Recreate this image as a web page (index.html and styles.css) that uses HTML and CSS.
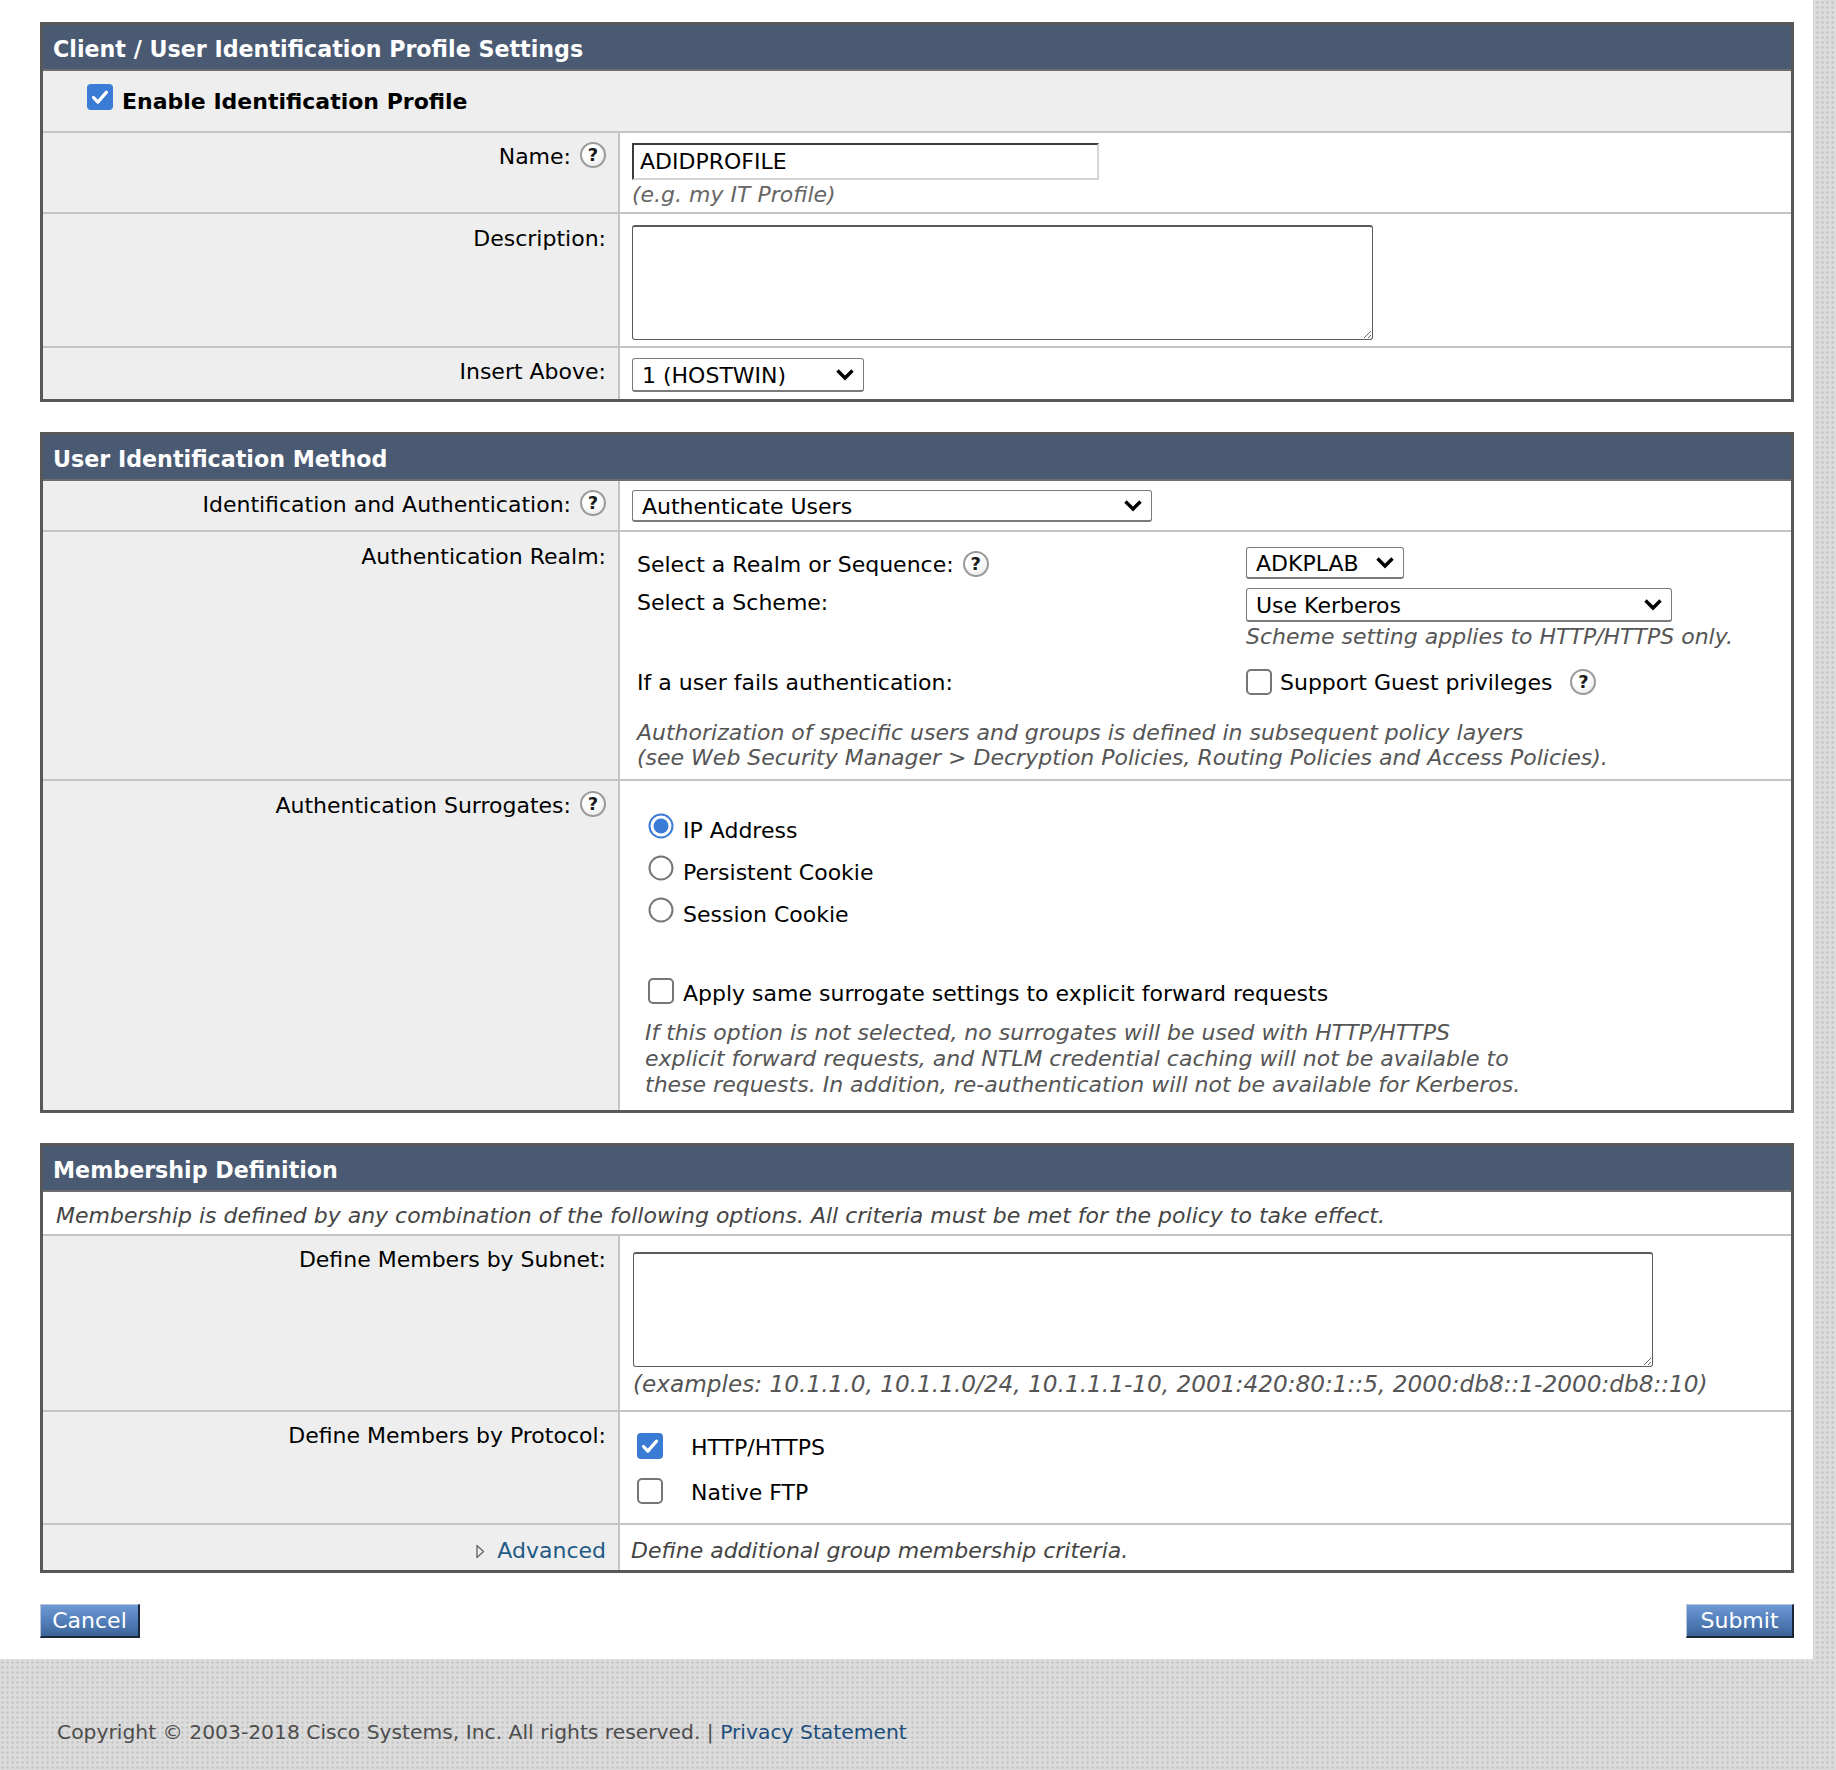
FILE: index.html
```html
<!DOCTYPE html>
<html lang="en">
<head>
<meta charset="utf-8">
<title>Client / User Identification Profile Settings</title>
<link rel="stylesheet" href="styles.css">
</head>
<body>
<div class="page">

  <section class="panel">
    <h2 class="panel-head">Client / User Identification Profile Settings</h2>
    <div class="enable-row">
      <svg class="cb" width="26" height="26" viewBox="0 0 26 26"><rect width="26" height="26" rx="4" fill="#3a7bd5"/><path d="M6.5 13.5l4.3 4.6 8.7-10" fill="none" stroke="#fff" stroke-width="3.2" stroke-linecap="round" stroke-linejoin="round"/></svg>
      <span>Enable Identification Profile</span>
    </div>
    <div class="row">
      <div class="lbl p11"><span>Name:</span><span class="help">?</span></div>
      <div class="val name-val">
        <input class="txt" type="text" value="ADIDPROFILE">
        <div class="hint">(e.g. my IT Profile)</div>
      </div>
    </div>
    <div class="row">
      <div class="lbl p12"><span>Description:</span></div>
      <div class="val desc-val"><textarea class="ta ta-desc"></textarea></div>
    </div>
    <div class="row">
      <div class="lbl p11"><span>Insert Above:</span></div>
      <div class="val insert-val">
        <div class="sel sel-insert"><span>1 (HOSTWIN)</span><svg class="chev" width="20" height="13" viewBox="0 0 20 13"><path d="M2.5 2.5l7.5 7.5 7.5-7.5" fill="none" stroke="#000" stroke-width="3.4"/></svg></div>
      </div>
    </div>
  </section>

  <section class="panel">
    <h2 class="panel-head">User Identification Method</h2>
    <div class="row">
      <div class="lbl p11"><span>Identification and Authentication:</span><span class="help">?</span></div>
      <div class="val ident-val">
        <div class="sel sel-auth"><span>Authenticate Users</span><svg class="chev" width="20" height="13" viewBox="0 0 20 13"><path d="M2.5 2.5l7.5 7.5 7.5-7.5" fill="none" stroke="#000" stroke-width="3.4"/></svg></div>
      </div>
    </div>
    <div class="row">
      <div class="lbl p12"><span>Authentication Realm:</span></div>
      <div class="val realm-val">
        <div class="realm">
          <div class="r1-label"><span>Select a Realm or Sequence:</span><span class="help">?</span></div>
          <div class="r1-ctrl">
            <div class="sel sel-realm"><span>ADKPLAB</span><svg class="chev" width="20" height="13" viewBox="0 0 20 13"><path d="M2.5 2.5l7.5 7.5 7.5-7.5" fill="none" stroke="#000" stroke-width="3.4"/></svg></div>
          </div>
          <div class="r2-label">Select a Scheme:</div>
          <div class="r2-ctrl">
            <div class="sel sel-scheme"><span>Use Kerberos</span><svg class="chev" width="20" height="13" viewBox="0 0 20 13"><path d="M2.5 2.5l7.5 7.5 7.5-7.5" fill="none" stroke="#000" stroke-width="3.4"/></svg></div>
            <div class="hint scheme-hint">Scheme setting applies to HTTP/HTTPS only.</div>
          </div>
          <div class="r3-label">If a user fails authentication:</div>
          <div class="r3-ctrl">
            <svg class="cb" width="26" height="26" viewBox="0 0 26 26"><rect x="1" y="1" width="24" height="24" rx="4" fill="#fff" stroke="#767676" stroke-width="2"/></svg>
            <span class="guest-text">Support Guest privileges</span>
            <span class="help guest-help">?</span>
          </div>
          <p class="realm-note">Authorization of specific users and groups is defined in subsequent policy layers<br>(see Web Security Manager &gt; Decryption Policies, Routing Policies and Access Policies).</p>
        </div>
      </div>
    </div>
    <div class="row">
      <div class="lbl p12"><span>Authentication Surrogates:</span><span class="help">?</span></div>
      <div class="val surr-val">
        <div class="radio-row">
          <svg width="26" height="26" viewBox="0 0 26 26"><circle cx="13" cy="13" r="11.5" fill="#fff" stroke="#3a7bd5" stroke-width="2"/><circle cx="13" cy="13" r="7.5" fill="#3a7bd5"/></svg>
          <span>IP Address</span>
        </div>
        <div class="radio-row">
          <svg width="26" height="26" viewBox="0 0 26 26"><circle cx="13" cy="13" r="11.5" fill="#fff" stroke="#767676" stroke-width="2"/></svg>
          <span>Persistent Cookie</span>
        </div>
        <div class="radio-row">
          <svg width="26" height="26" viewBox="0 0 26 26"><circle cx="13" cy="13" r="11.5" fill="#fff" stroke="#767676" stroke-width="2"/></svg>
          <span>Session Cookie</span>
        </div>
        <div class="apply-row">
          <svg width="26" height="26" viewBox="0 0 26 26"><rect x="1" y="1" width="24" height="24" rx="4" fill="#fff" stroke="#767676" stroke-width="2"/></svg>
          <span>Apply same surrogate settings to explicit forward requests</span>
        </div>
        <p class="surr-note">If this option is not selected, no surrogates will be used with HTTP/HTTPS<br>explicit forward requests, and NTLM credential caching will not be available to<br>these requests. In addition, re-authentication will not be available for Kerberos.</p>
      </div>
    </div>
  </section>

  <section class="panel panel-last">
    <h2 class="panel-head">Membership Definition</h2>
    <div class="intro">Membership is defined by any combination of the following options. All criteria must be met for the policy to take effect.</div>
    <div class="row">
      <div class="lbl p11"><span>Define Members by Subnet:</span></div>
      <div class="val subnet-val">
        <textarea class="ta ta-subnet"></textarea>
        <div class="hint examples">(examples: 10.1.1.0, 10.1.1.0/24, 10.1.1.1-10, 2001:420:80:1::5, 2000:db8::1-2000:db8::10)</div>
      </div>
    </div>
    <div class="row">
      <div class="lbl p11"><span>Define Members by Protocol:</span></div>
      <div class="val proto-val">
        <div class="proto-row">
          <svg width="26" height="26" viewBox="0 0 26 26"><rect width="26" height="26" rx="4" fill="#3a7bd5"/><path d="M6.5 13.5l4.3 4.6 8.7-10" fill="none" stroke="#fff" stroke-width="3.2" stroke-linecap="round" stroke-linejoin="round"/></svg>
          <span>HTTP/HTTPS</span>
        </div>
        <div class="proto-row">
          <svg width="26" height="26" viewBox="0 0 26 26"><rect x="1" y="1" width="24" height="24" rx="4" fill="#fff" stroke="#767676" stroke-width="2"/></svg>
          <span>Native FTP</span>
        </div>
      </div>
    </div>
    <div class="row">
      <div class="lbl p13 adv-lbl">
        <svg width="9" height="15" viewBox="0 0 9 15"><path d="M1 1.5l6.5 6-6.5 6z" fill="none" stroke="#6a6a6a" stroke-width="1.4" stroke-linejoin="round"/></svg>
        <a class="link" href="#">Advanced</a>
      </div>
      <div class="val adv-val">Define additional group membership criteria.</div>
    </div>
  </section>

  <div class="actions">
    <button class="btn btn-cancel" type="button">Cancel</button>
    <button class="btn btn-submit" type="button">Submit</button>
  </div>
</div>

<footer class="footer">Copyright &copy; 2003-2018 Cisco Systems, Inc. All rights reserved. | <a href="#">Privacy Statement</a></footer>
</body>
</html>
```

FILE: styles.css
```css
* {
  box-sizing: border-box;
}

html,
body {
  margin: 0;
  padding: 0;
}

body {
  font-family: "DejaVu Sans", Verdana, sans-serif;
  font-size: 22px;
  line-height: 26px;
  color: #111;
  background-color: #dcdcdc;
  background-image: radial-gradient(circle, #c8c8c8 1px, transparent 1.6px);
  background-size: 5px 5px;
}

.page {
  width: 1813px;
  background: #fff;
  padding: 22px 19px 21px 40px;
}

/* panels */
.panel {
  border: 3px solid #585858;
  margin-bottom: 30px;
}

.panel-last {
  margin-bottom: 0;
}

.panel-head {
  margin: 0;
  height: 46px;
  padding: 11px 10px 0;
  background: #4a5a73;
  color: #fff;
  font-size: 22.2px;
  line-height: 26px;
  font-weight: bold;
  border-bottom: 2px solid #6e6e6e;
}

.enable-row {
  display: flex;
  align-items: flex-start;
  gap: 9px;
  padding: 13px 0 16px 44px;
  background: #eee;
  border-bottom: 2px solid #c4c4c4;
  font-weight: bold;
  color: #000;
}

.enable-row span {
  margin-top: 5px;
}

.row {
  display: grid;
  grid-template-columns: 577px 1fr;
  border-bottom: 2px solid #c4c4c4;
}

.row:last-child {
  border-bottom: 0;
}

.lbl {
  background: #eee;
  border-right: 2px solid #c4c4c4;
  padding: 10px 12px 0 0;
  display: flex;
  justify-content: flex-end;
  align-items: flex-start;
  gap: 9px;
  color: #000;
}

.p10 { padding-top: 10px; }
.p11 { padding-top: 11px; }
.p12 { padding-top: 12px; }
.p13 { padding-top: 13px; }

.val {
  padding: 10px 0 0 12px;
  color: #000;
}

/* help icon */
.help {
  display: inline-flex;
  align-items: center;
  justify-content: center;
  flex: none;
  width: 26px;
  height: 26px;
  border: 2px solid #9a9a9a;
  border-radius: 50%;
  background: radial-gradient(circle at 40% 35%, #fff 40%, #e0e0e0 100%);
  color: #1a1a1a;
  font-family: "DejaVu Sans", Verdana, sans-serif;
  font-size: 18px;
  font-weight: bold;
  line-height: 1;
  margin-top: -2px;
}

/* inputs */
.txt {
  display: block;
  width: 467px;
  height: 37px;
  margin: 0;
  padding: 0 6px;
  font: inherit;
  color: #000;
  background: #fff;
  border-style: solid;
  border-width: 2px;
  border-color: #3c3c3c #d4d4d4 #d4d4d4 #3c3c3c;
  outline: none;
}

.hint {
  font-style: italic;
  color: #666;
}

.name-val {
  padding-bottom: 4px;
}

.name-val .hint {
  margin-top: 2px;
}

.ta {
  display: block;
  margin: 0;
  padding: 2px;
  font: inherit;
  border: 1px solid #5a5a5a;
  border-top-width: 2px;
  border-radius: 3px;
  background: #fff;
  resize: both;
  outline: none;
}

.ta-desc {
  width: 741px;
  height: 115px;
}

.desc-val {
  padding-top: 11px;
  padding-bottom: 6px;
}

.sel {
  display: flex;
  align-items: center;
  justify-content: space-between;
  background: #fff;
  border: 1px solid #7a7a7a;
  border-bottom-width: 2px;
  border-radius: 3px;
  padding: 0 8px 0 9px;
  color: #000;
}

.sel span {
  margin-top: 2px;
}

.chev {
  flex: none;
}

.sel-insert {
  width: 232px;
  height: 34px;
}

.insert-val {
  padding-bottom: 7px;
}

.ident-val {
  padding-top: 9px;
  padding-bottom: 8px;
}

.sel-auth {
  width: 520px;
  height: 32px;
}

/* realm block */
.realm-val {
  padding: 15px 0 9px 17px;
}

.realm {
  display: grid;
  grid-template-columns: 609px auto;
}

.r1-label {
  display: flex;
  align-items: flex-start;
  gap: 9px;
  margin-top: 5px;
}

.r1-label .help {
  margin-top: -1px;
}

.r1-ctrl {
  display: flex;
}

.sel-realm {
  width: 158px;
  height: 32px;
}

.r2-label {
  margin-top: 11px;
}

.r2-ctrl {
  margin-top: 9px;
}

.sel-scheme {
  width: 426px;
  height: 34px;
}

.scheme-hint {
  margin-top: 2px;
  color: #555;
}

.r3-label {
  margin-top: 20px;
}

.r3-ctrl {
  display: flex;
  align-items: flex-start;
  margin-top: 19px;
}

.guest-text {
  margin-left: 8px;
  margin-top: 1px;
}

.guest-help {
  margin-left: 18px;
  margin-top: 0;
}

.realm-note {
  grid-column: 1 / -1;
  margin: 24px 0 0;
  font-style: italic;
  color: #555;
  line-height: 25px;
  white-space: nowrap;
}

/* surrogates */
.surr-val {
  padding: 32px 0 12px 25px;
}

.radio-row {
  display: flex;
  align-items: flex-start;
  gap: 9px;
  height: 42px;
  padding-left: 3px;
}

.radio-row span {
  margin-top: 5px;
}

.apply-row {
  display: flex;
  align-items: flex-start;
  gap: 9px;
  height: 29px;
  margin-top: 39px;
  padding-left: 3px;
}

.apply-row span {
  margin-top: 3px;
}

.surr-note {
  margin: 13px 0 0;
  font-style: italic;
  color: #555;
  white-space: nowrap;
}

/* membership */
.intro {
  padding: 11px 13px 5px;
  font-style: italic;
  color: #444;
  background: #fff;
  border-bottom: 2px solid #c4c4c4;
}

.subnet-val {
  padding: 16px 0 13px 13px;
}

.ta-subnet {
  width: 1020px;
  height: 115px;
}

.examples {
  margin-top: 4px;
  color: #555;
  font-size: 23.2px;
  white-space: nowrap;
}

.proto-val {
  padding: 21px 0 17px 17px;
}

.proto-row {
  display: flex;
  align-items: flex-start;
  gap: 28px;
}

.proto-row:first-child {
  height: 45px;
}

.proto-row span {
  margin-top: 2px;
}

.adv-lbl {
  align-items: center;
  gap: 12px;
  padding-bottom: 6px;
}

.link {
  color: #1f5a86;
  text-decoration: none;
}

.adv-val {
  padding: 13px 0 6px 11px;
  font-style: italic;
  color: #444;
}

/* buttons */
.actions {
  display: flex;
  justify-content: space-between;
  margin-top: 31px;
}

.btn {
  height: 34px;
  margin: 0;
  padding: 0;
  font-family: "DejaVu Sans", Verdana, sans-serif;
  font-size: 22px;
  line-height: 26px;
  color: #fff;
  background: linear-gradient(to bottom, #6f99d3 0%, #5582be 45%, #3d6499 100%);
  border-style: solid;
  border-width: 1px 2px 2px 1px;
  border-color: #b9c5d6 #1b2637 #1b2637 #b9c5d6;
  cursor: pointer;
}

.btn-cancel {
  width: 100px;
}

.btn-submit {
  width: 108px;
}

/* footer */
.footer {
  height: 111px;
  padding: 61px 0 0 57px;
  font-size: 20.3px;
  line-height: 24px;
  color: #4d4d4d;
}

.footer a {
  color: #1c4e7c;
  text-decoration: none;
}
```
